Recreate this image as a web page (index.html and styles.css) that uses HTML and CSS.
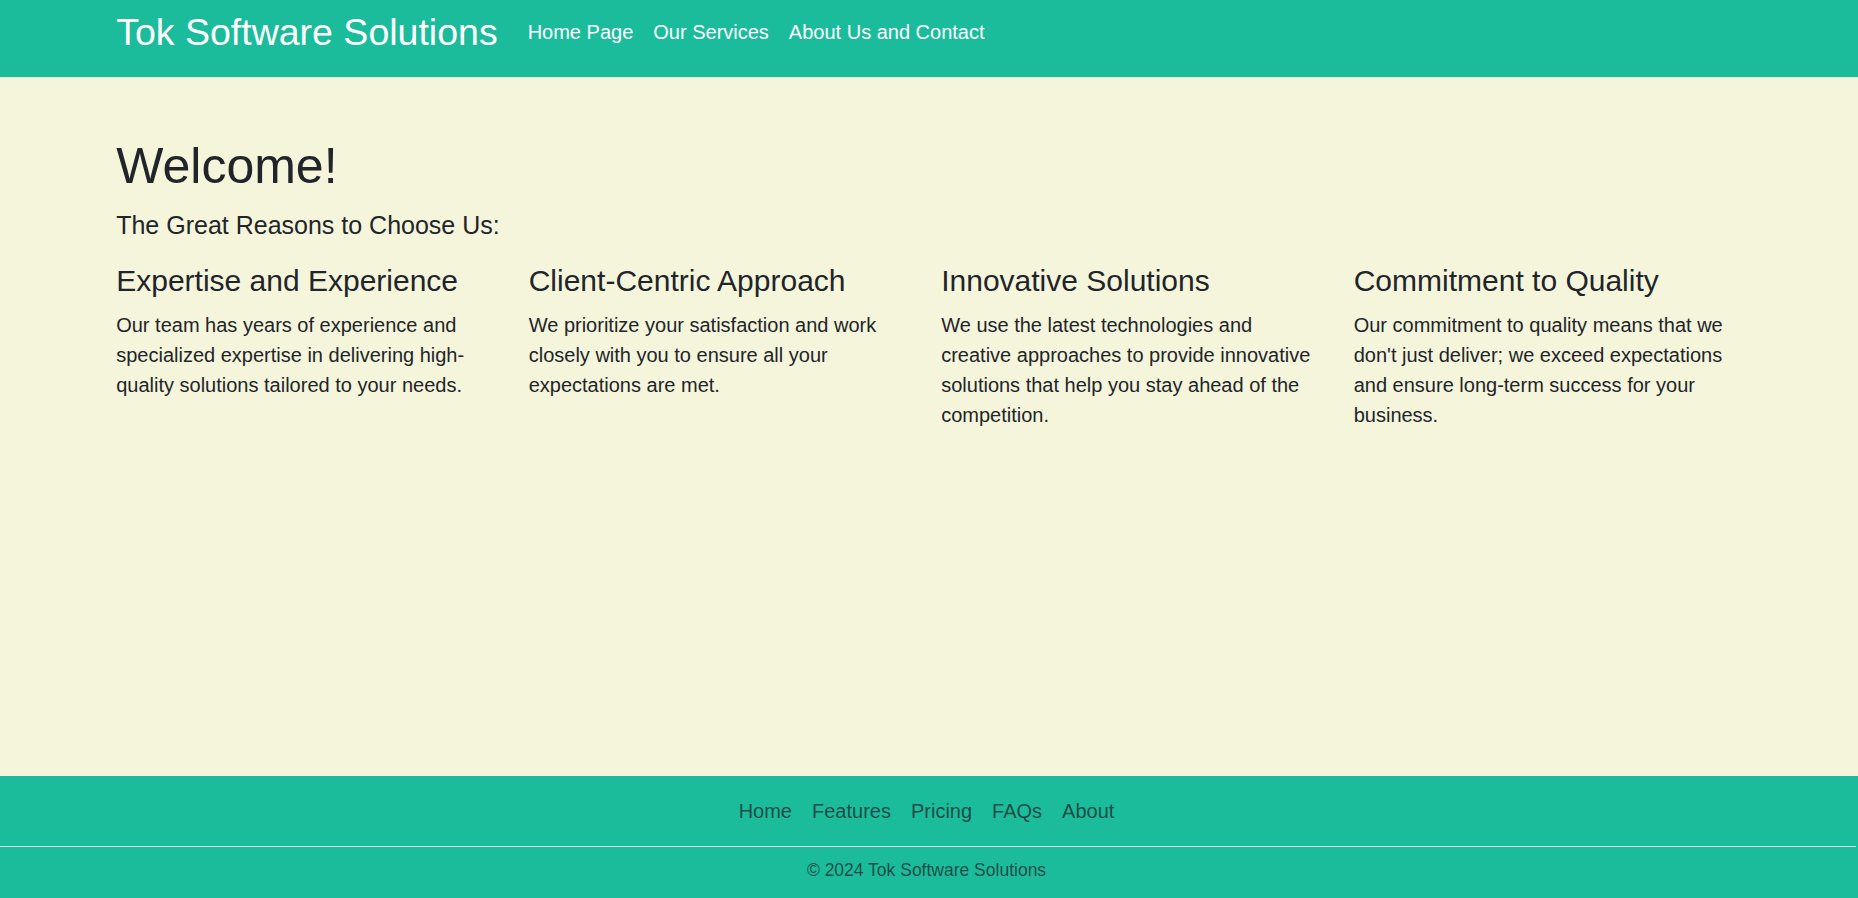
FILE: index.html
```html
<!DOCTYPE html>
<html lang="en">
<head>
<meta charset="utf-8">
<title>Tok Software Solutions</title>
<link rel="stylesheet" href="styles.css">
</head>
<body>
<header class="site-header">
  <nav class="navbar">
    <a class="brand" href="#">Tok Software Solutions</a>
    <ul class="nav-links">
      <li><a href="#">Home Page</a></li>
      <li><a href="#">Our Services</a></li>
      <li><a href="#">About Us and Contact</a></li>
    </ul>
  </nav>
</header>
<main class="content">
  <h1 class="title">Welcome!</h1>
  <h5 class="subtitle">The Great Reasons to Choose Us:</h5>
  <div class="reasons">
    <div class="reason">
      <h4 class="reason-title">Expertise and Experience</h4>
      <p class="reason-text">Our team has years of experience and specialized expertise in delivering high-quality solutions tailored to your needs.</p>
    </div>
    <div class="reason">
      <h4 class="reason-title">Client-Centric Approach</h4>
      <p class="reason-text">We prioritize your satisfaction and work closely with you to ensure all your expectations are met.</p>
    </div>
    <div class="reason">
      <h4 class="reason-title">Innovative Solutions</h4>
      <p class="reason-text">We use the latest technologies and creative approaches to provide innovative solutions that help you stay ahead of the competition.</p>
    </div>
    <div class="reason">
      <h4 class="reason-title">Commitment to Quality</h4>
      <p class="reason-text">Our commitment to quality means that we don't just deliver; we exceed expectations and ensure long-term success for your business.</p>
    </div>
  </div>
</main>
<footer class="site-footer">
  <ul class="footer-nav">
    <li><a href="#">Home</a></li>
    <li><a href="#">Features</a></li>
    <li><a href="#">Pricing</a></li>
    <li><a href="#">FAQs</a></li>
    <li><a href="#">About</a></li>
  </ul>
  <p class="copyright">© 2024 Tok Software Solutions</p>
</footer>
</body>
</html>
```

FILE: styles.css
```css
* {
  box-sizing: border-box;
}

html, body {
  margin: 0;
  padding: 0;
}

body {
  font-family: "Liberation Sans", Arial, sans-serif;
  font-size: 20px;
  line-height: 1.5;
  color: #212529;
  background: #f5f5dc;
  min-height: 100vh;
  display: flex;
  flex-direction: column;
}

a {
  text-decoration: none;
}

ul {
  list-style: none;
  margin: 0;
  padding: 0;
}

/* Header */
.site-header {
  background: #1abc9c;
}

.navbar {
  height: 77px;
  padding: 0 116.2px 12px;
  display: flex;
  align-items: center;
}

.brand {
  color: #ffffff;
  font-size: 37.5px;
  line-height: 1.2;
  margin-right: 20px;
}

.nav-links {
  display: flex;
  margin-bottom: 2px;
}

.nav-links a {
  display: block;
  color: #ffffff;
  padding: 0 10px;
  font-size: 20px;
  line-height: 30px;
}

/* Main */
.content {
  flex: 1;
  padding: 59px 121.8px 0 116.2px;
}

.title {
  font-size: 50px;
  font-weight: 400;
  line-height: 60px;
  margin: 0 0 13.7px;
}

.subtitle {
  font-size: 25px;
  font-weight: 400;
  line-height: 30px;
  margin: 0 0 22.9px;
}

.reasons {
  display: grid;
  grid-template-columns: repeat(4, 1fr);
  column-gap: 30px;
}

.reason-title {
  font-size: 30px;
  font-weight: 400;
  line-height: 36px;
  margin: 0 0 11px;
}

.reason-text {
  margin: 0;
  font-size: 20px;
  line-height: 30px;
}

/* Footer */
.site-footer {
  background: #1abc9c;
  padding: 10px 0 14.75px;
}

.footer-nav {
  display: flex;
  justify-content: center;
  padding: 0 3px 10px 0;
  border-bottom: 1px solid #dee2e6;
  margin-right: 2px;
}

.footer-nav a {
  display: block;
  padding: 10px;
  color: rgba(33, 37, 41, 0.75);
  font-size: 20px;
  line-height: 30px;
}

.copyright {
  margin: 10px 0 0;
  padding-right: 5px;
  text-align: center;
  font-size: 17.5px;
  line-height: 26.25px;
  color: rgba(33, 37, 41, 0.75);
}
```
